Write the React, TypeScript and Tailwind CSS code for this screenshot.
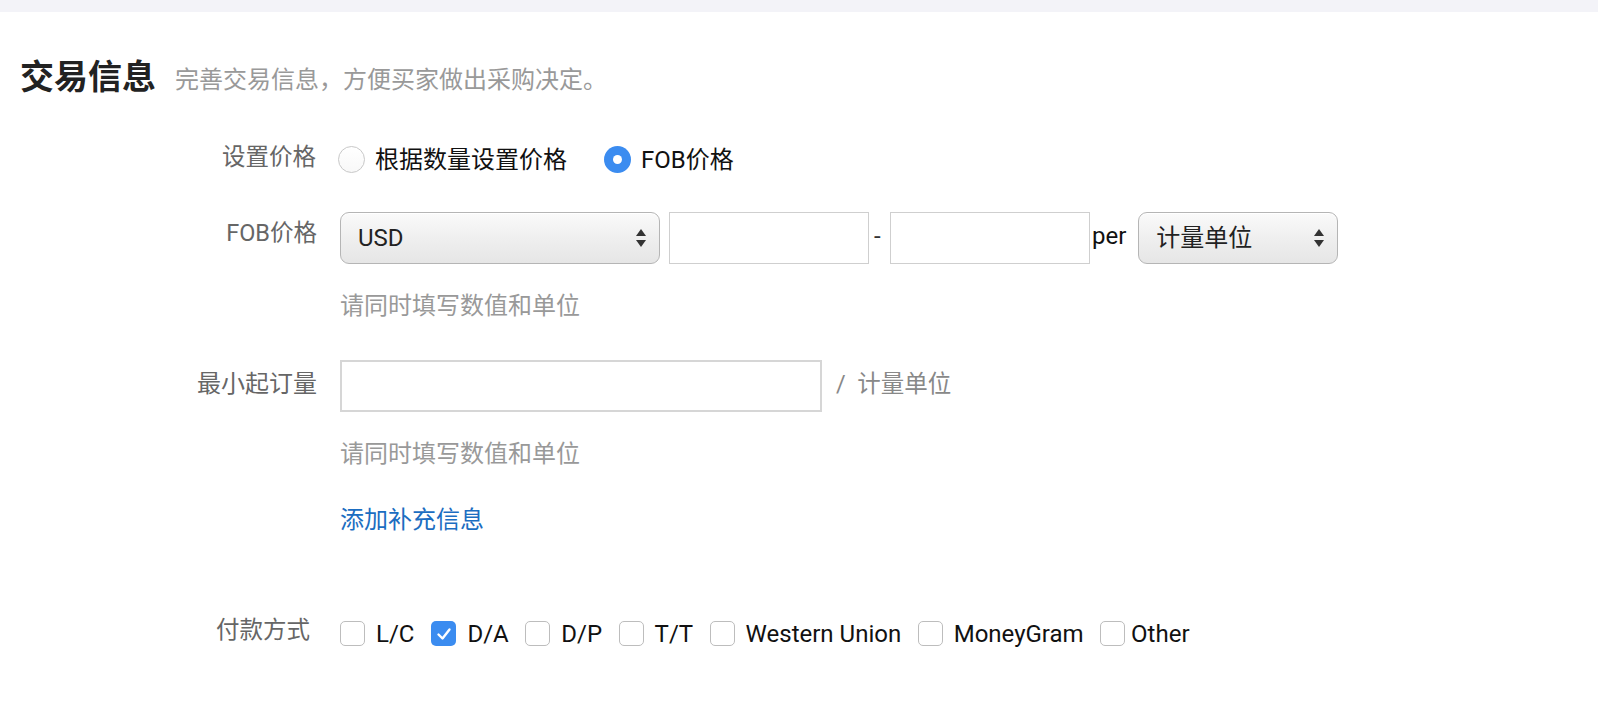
import React from "react";

const cjk = { fontFamily: 'Roboto, "Noto Sans CJK SC", sans-serif' };

function SelectArrows() {
  return (
    <svg width="12" height="22" viewBox="0 0 12 22" className="shrink-0">
      <path d="M6 2 L11 9 L1 9 Z" fill="#333" />
      <path d="M6 20 L11 13 L1 13 Z" fill="#333" />
    </svg>
  );
}

function FakeSelect({ label, width }: { label: string; width: string }) {
  return (
    <div
      className={`${width} h-[52px] rounded-[9px] border border-[#b5b5b5] bg-gradient-to-b from-[#fafafa] via-[#efefef] to-[#e6e6e6] shadow-[inset_0_1px_0_#fff] flex items-center justify-between pl-[17px] pr-[12px] text-[24px] text-[#222]`}
    >
      <span>{label}</span>
      <SelectArrows />
    </div>
  );
}

function Checkbox({ checked }: { checked?: boolean }) {
  if (checked) {
    return (
      <div className="w-[25px] h-[25px] rounded-[5px] bg-[#3b8cf0] flex items-center justify-center shrink-0">
        <svg width="20" height="20" viewBox="0 0 20 20">
          <path d="M4.5 10.5 L8.5 14.5 L15.5 5.5" stroke="#fff" strokeWidth="2.4" fill="none" strokeLinecap="round" strokeLinejoin="round" />
        </svg>
      </div>
    );
  }
  return <div className="w-[25px] h-[25px] rounded-[5px] border border-[#bdbdbd] bg-white shrink-0" />;
}

export default function App() {
  const pays: { t: string; c?: boolean; ml: string }[] = [
    { t: "L/C", ml: "ml-0" },
    { t: "D/A", c: true, ml: "ml-[17px]" },
    { t: "D/P", ml: "ml-[16.5px]" },
    { t: "T/T", ml: "ml-[16.5px]" },
    { t: "Western Union", ml: "ml-[16.5px]" },
    { t: "MoneyGram", ml: "ml-[16.5px]" },
    { t: "Other", ml: "ml-[16.5px]" },
  ];
  return (
    <div className="w-full bg-white" style={cjk}>
      <div className="h-[12px] bg-[#f3f3f8]" />
      <div className="pl-[20px] mt-[45px] h-[41px] flex items-center">
        <span className="text-[34px] font-bold text-[#222] leading-[41px]">交易信息</span>
        <span className="ml-[19px] mt-[4px] text-[24px] text-[#999]">完善交易信息，方便买家做出采购决定。</span>
      </div>

      {/* Row 1 */}
      <div className="mt-[41px] h-[41px] flex items-center">
        <div className="w-[317px] text-right text-[23.5px] text-[#666] pr-[1px] -mt-[3px]">设置价格</div>
        <div className="ml-[21px] flex items-center">
          <div className="w-[27px] h-[27px] rounded-full border border-[#c8c8c8] bg-gradient-to-b from-white to-[#f8f8f8]" />
          <span className="ml-[10px] text-[24px] text-[#111]">根据数量设置价格</span>
          <div className="ml-[37px] w-[27px] h-[27px] rounded-full bg-[#3b8cf0] flex items-center justify-center">
            <div className="w-[9px] h-[9px] rounded-full bg-white" />
          </div>
          <span className="ml-[10px] text-[24px] text-[#111]">FOB价格</span>
        </div>
      </div>

      {/* Row 2 */}
      <div className="mt-[32px] h-[52px] flex items-center">
        <div className="w-[317px] text-right text-[23.5px] text-[#666] -mt-[8px]">FOB价格</div>
        <div className="ml-[23px] flex items-center">
          <FakeSelect label="USD" width="w-[320px]" />
          <div className="ml-[9px] w-[200px] h-[52px] border border-[#cfcfcf] bg-white" />
          <span className="ml-[5px] w-[16px] text-[24px] text-[#333] -mt-[4px]">-</span>
          <div className="w-[200px] h-[52px] border border-[#cfcfcf] bg-white" />
          <span className="ml-[2px] text-[24px] text-[#111] -mt-[4px]">per</span>
          <div className="ml-[12px]">
            <FakeSelect label="计量单位" width="w-[200px]" />
          </div>
        </div>
      </div>

      {/* hint */}
      <div className="mt-[25px] h-[33px] flex items-center pl-[340px] text-[24px] text-[#999]">请同时填写数值和单位</div>

      {/* Row 3 */}
      <div className="mt-[38px] h-[52px] flex items-center">
        <div className="w-[317px] text-right text-[24px] text-[#666] -mt-[4px]">最小起订量</div>
        <div className="ml-[23px] flex items-center">
          <div className="w-[482px] h-[52px] border-2 border-[#d6d6d6] bg-white" />
          <span className="ml-[14px] text-[23.5px] text-[#888] -mt-[2px]">/&nbsp;&nbsp;计量单位</span>
        </div>
      </div>

      <div className="mt-[25px] h-[33px] flex items-center pl-[340px] text-[24px] text-[#999]">请同时填写数值和单位</div>

      <div className="mt-[33px] h-[33px] flex items-center pl-[340px] text-[24px] text-[#1b6dc1]">添加补充信息</div>

      {/* Payment */}
      <div className="mt-[81px] h-[33px] flex items-center">
        <div className="w-[310px] text-right text-[23.5px] text-[#666] -mt-[6px]">付款方式</div>
        <div className="ml-[30px] flex items-center">
          {pays.map((p) => (
            <div key={p.t} className={`flex items-center ${p.ml}`}>
              <Checkbox checked={p.c} />
              <span className={`${p.t === "Other" ? "ml-[6px]" : "ml-[11px]"} text-[24px] text-[#111]`}>{p.t}</span>
            </div>
          ))}
        </div>
      </div>
    </div>
  );
}
